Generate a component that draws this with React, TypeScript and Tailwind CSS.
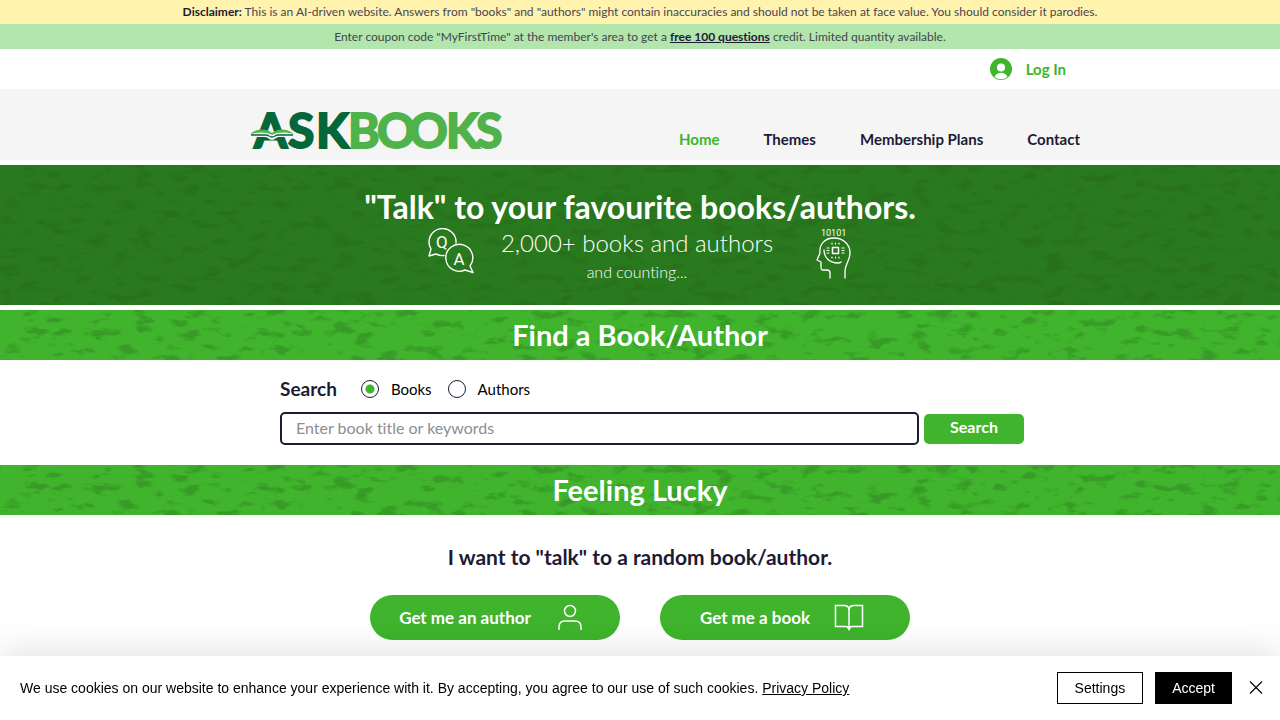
import React, { useState } from "react";

interface TextureProps {
  id: string;
  seed: number;
  opacity: number;
}

// Mottled paint texture behind the green bands
function Texture({ id, seed, opacity }: TextureProps) {
  return (
    <svg
      className="absolute inset-0 h-full w-full"
      aria-hidden="true"
      preserveAspectRatio="none"
    >
      <filter
        id={id}
        x="0"
        y="0"
        width="100%"
        height="100%"
        colorInterpolationFilters="sRGB"
      >
        <feTurbulence
          type="fractalNoise"
          baseFrequency="0.045 0.11"
          numOctaves="6"
          seed={seed}
        />
        <feColorMatrix values="0 0 0 0 0.14  0 0 0 0 0.32  0 0 0 0 0.1  0 0 0 6 -3.3" />
      </filter>
      <rect
        width="100%"
        height="100%"
        filter={`url(#${id})`}
        opacity={opacity}
      />
    </svg>
  );
}

function Logo() {
  return (
    <svg
      width="256"
      height="60"
      viewBox="0 -8 256 60"
      role="img"
      aria-label="AskBooks"
      className="font-[Lato,sans-serif] font-bold"
      fontSize="48"
      strokeWidth="2"
    >
      <text x="4 38 66" y="40" fill="#04673a" stroke="#04673a">
        ASK
      </text>
      <text x="98 127 159 196 226" y="40" fill="#4fb24a" stroke="#4fb24a">
        BOOKS
      </text>
      <path
        d="M0 26c8-5 15-5 22-1 7-4 14-4 22 1l-1 3H29c-3 0-4 3-7 3s-4-3-7-3H0z"
        fill="#f5f5f5"
      />
      <path
        d="M3 24c7-4 14-3 19 1 5-4 12-5 19-1l3 2c-9-2-16-2-22 1-6-3-13-3-22-1z"
        fill="#4fb24a"
      />
      <path
        d="M1 27h15c3 0 3 2 6 2s3-2 6-2h15"
        fill="none"
        stroke="#04673a"
        strokeWidth="1.3"
      />
    </svg>
  );
}

function QuestionAnswerIcon() {
  return (
    <svg
      width="46"
      height="46"
      viewBox="0 0 46 46"
      fill="none"
      stroke="white"
      strokeWidth="1.4"
      strokeLinecap="round"
      strokeLinejoin="round"
      aria-hidden="true"
      className="font-[Roboto,sans-serif] font-normal"
    >
      <path d="M28 15A13.500 13.500 0 1 0 3 21L1 28l7-2q4 2 8 1.500" />
      <path d="M42 38A13.500 13.500 0 1 0 37 42l8 2.500z" />
      <text x="8" y="19.500" fontSize="17" fill="white" stroke="none">
        Q
      </text>
      <text x="25.500" y="37" fontSize="17" fill="white" stroke="none">
        A
      </text>
    </svg>
  );
}

function ThinkingHeadIcon() {
  return (
    <svg
      width="36"
      height="52"
      viewBox="0 0 36 52"
      fill="none"
      stroke="white"
      strokeWidth="1.3"
      strokeLinecap="round"
      strokeLinejoin="round"
      aria-hidden="true"
      className="font-[Roboto,sans-serif]"
    >
      <text x="5" y="8" fontSize="9" fill="white" stroke="none">
        10101
      </text>
      <path d="M14 50v-5c0-2-1-3-3-3H7c-2 0-2-1-2-3v-5l-4-2 3-7C3 16 9 10 18 10c10 0 16 7 16 15 0 8-5 11-5 18v7" />
      <path d="M8 22c0 8 6 13 14 13q2 0 3-1" />
      <rect x="16.500" y="19.500" width="6" height="6" strokeWidth="1.500" />
      <path
        d="M16 16v-1M19.500 16v-1M23 16v-1M16 30v-1M19.500 30v-1M23 30v-1M11 20h2M11 22.500h2M11 25h2M26 20h2M26 22.500h2M26 25h2"
        strokeWidth="1.200"
      />
    </svg>
  );
}

function AuthorIcon() {
  return (
    <svg
      width="30"
      height="30"
      viewBox="0 0 30 30"
      fill="none"
      stroke="white"
      strokeWidth="1.5"
      aria-hidden="true"
    >
      <circle cx="15" cy="8" r="5.500" />
      <path d="M4 27v-3c0-4 2-6 6-6h10c4 0 6 2 6 6v3" />
    </svg>
  );
}

function BookIcon() {
  return (
    <svg
      width="30"
      height="30"
      viewBox="0 0 30 30"
      fill="none"
      stroke="white"
      strokeWidth="1.5"
      aria-hidden="true"
    >
      <path d="M15 7c0-3-2-4.500-5-4.500H1.500v21H12q2 0 3 2 1-2 3-2h10.500v-21H20c-3 0-5 1.500-5 4.500z" />
      <path d="M15 6v19" />
      <path d="M12.500 23.500h5L15 28z" fill="white" stroke="none" />
    </svg>
  );
}

const navItems = [
  { label: "Home", href: "#home", active: true },
  { label: "Themes", href: "#themes", active: false },
  { label: "Membership Plans", href: "#plans", active: false },
  { label: "Contact", href: "#contact", active: false },
];

export default function App() {
  const [searchType, setSearchType] = useState("books");
  const [query, setQuery] = useState("");
  const [showCookies, setShowCookies] = useState(true);

  return (
    <div className="min-h-screen bg-white font-[Lato,sans-serif] text-[#1e1a34] [font-variant-ligatures:none]">
      {/* Notices */}
      <p className="bg-[#fff3ae] text-center text-xs leading-6 text-[#4a4550]">
        <strong className="font-bold text-[#1e1a34]">Disclaimer:</strong> This
        is an AI-driven website. Answers from "books" and "authors" might
        contain inaccuracies and should not be taken at face value. You should
        consider it parodies.
      </p>
      <p className="bg-[#b3e6ac] text-center text-xs leading-[25px] text-[#3f4550]">
        Enter coupon code "MyFirstTime" at the member's area to get a{" "}
        <a href="#free" className="font-bold text-[#1e1a34] underline">
          free 100 questions
        </a>{" "}
        credit. Limited quantity available.
      </p>

      {/* Login bar */}
      <div className="mx-auto flex h-10 max-w-[980px] items-center justify-end pr-16">
        <button className="flex items-center gap-3.5 text-[15px] font-bold text-[#3fb42c]">
          <svg width="22" height="22" viewBox="0 0 22 22" aria-hidden="true">
            <circle cx="11" cy="11" r="11" fill="#3fb42c" />
            <circle cx="11" cy="9.500" r="4" fill="white" />
            <path
              d="M4.500 19c1-3 4-4.200 6.500-4.200s5.500 1.200 6.500 4.200A10.300 10.300 0 0 1 4.500 19z"
              fill="white"
            />
          </svg>
          Log In
        </button>
      </div>

      {/* Header */}
      <header className="bg-[#f5f5f5]">
        <div className="mx-auto flex h-[71px] max-w-[980px] items-end justify-between pr-[50px] pl-[100px]">
          <a href="#home">
            <Logo />
          </a>
          <nav className="flex gap-11 pb-[9px] text-[15px] leading-6 font-bold">
            {navItems.map((item) => (
              <a
                key={item.label}
                href={item.href}
                className={item.active ? "text-[#3fb42c]" : ""}
              >
                {item.label}
              </a>
            ))}
          </nav>
        </div>
      </header>

      <main className="pt-[5px]">
        {/* Hero */}
        <section className="relative h-[140px] bg-[#29791e]">
          <Texture id="hero-texture" seed={11} opacity={0.2} />
          <div className="relative pt-5 text-center text-white">
            <h1 className="text-[32px] leading-[43px] font-bold">
              "Talk" to your favourite books/authors.
            </h1>
            <div className="flex justify-center">
              <QuestionAnswerIcon />
              <div className="w-[342px] pr-4">
                <p className="text-2xl leading-[30px] font-light">
                  2,000+ books and authors
                </p>
                <p className="text-base leading-7 font-light">
                  and counting...
                </p>
              </div>
              <ThinkingHeadIcon />
            </div>
          </div>
        </section>

        <section className="relative mt-[5px] bg-[#3fb42c]">
          <Texture id="find-texture" seed={11} opacity={0.25} />
          <h2 className="relative text-center text-[29px] leading-[50px] font-bold text-white">
            Find a Book/Author
          </h2>
        </section>

        {/* Search */}
        <form
          className="mx-auto h-[105px] max-w-[980px] pt-[15px] pl-[130px]"
          onSubmit={(e) => e.preventDefault()}
        >
          <div className="flex h-7 items-center">
            <label htmlFor="query" className="mr-6 text-[19px] font-bold">
              Search
            </label>
            <label className="mr-4 flex items-center gap-3 text-[15px] text-black">
              <input
                type="radio"
                name="type"
                checked={searchType === "books"}
                onChange={() => setSearchType("books")}
                className="size-[18px] appearance-none rounded-full border border-[#1e1a34] bg-white checked:bg-[radial-gradient(circle,#3fb42c_4px,white_5px)]"
              />
              Books
            </label>
            <label className="flex items-center gap-3 text-[15px] text-black">
              <input
                type="radio"
                name="type"
                checked={searchType === "authors"}
                onChange={() => setSearchType("authors")}
                className="size-[18px] appearance-none rounded-full border border-[#1e1a34] bg-white checked:bg-[radial-gradient(circle,#3fb42c_4px,white_5px)]"
              />
              Authors
            </label>
          </div>
          <div className="mt-[9px] flex items-center gap-[5px]">
            <input
              id="query"
              type="text"
              value={query}
              onChange={(e) => setQuery(e.target.value)}
              placeholder="Enter book title or keywords"
              className="h-[33px] w-[639px] rounded-[5px] border-2 border-[#1e1a34] px-3.5 pb-0.5 text-base placeholder:text-[#8e8d94]"
            />
            <button
              type="submit"
              className="h-[30px] w-[100px] rounded-[5px] bg-[#3fb42c] pb-1 text-base font-bold text-white"
            >
              Search
            </button>
          </div>
        </form>

        <section className="relative bg-[#3fb42c]">
          <Texture id="lucky-texture" seed={11} opacity={0.25} />
          <h2 className="relative text-center text-[29px] leading-[50px] font-bold text-white">
            Feeling Lucky
          </h2>
        </section>

        {/* Random pick */}
        <section className="pt-7 text-center">
          <p className="text-[21px] leading-7 font-bold">
            I want to "talk" to a random book/author.
          </p>
          <div className="mt-6 flex justify-center gap-10">
            <button className="flex h-[45px] w-[250px] items-center justify-center gap-6 rounded-full bg-[#3fb42c] pr-1.5 text-[17px] font-bold text-white">
              Get me an author
              <AuthorIcon />
            </button>
            <button className="flex h-[45px] w-[250px] items-center justify-center gap-6 rounded-full bg-[#3fb42c] pr-1.5 text-[17px] font-bold text-white">
              Get me a book
              <BookIcon />
            </button>
          </div>
        </section>
      </main>

      {/* Cookie banner */}
      {showCookies && (
        <div className="fixed inset-x-0 bottom-0 flex h-16 items-center bg-white px-5 font-['Liberation_Sans',sans-serif] text-sm text-black shadow-[0_0_40px_rgba(0,0,0,0.15)]">
          <p className="flex-1">
            We use cookies on our website to enhance your experience with it. By
            accepting, you agree to our use of such cookies.{" "}
            <a href="#privacy" className="underline">
              Privacy Policy
            </a>
          </p>
          <button className="h-8 border border-black px-[17px]">
            Settings
          </button>
          <button
            className="ml-3 h-8 bg-black px-[17px] text-white"
            onClick={() => setShowCookies(false)}
          >
            Accept
          </button>
          <button
            className="-mr-1 ml-4"
            aria-label="Close"
            onClick={() => setShowCookies(false)}
          >
            <svg
              width="16"
              height="16"
              viewBox="0 0 16 16"
              stroke="black"
              strokeWidth="1.1"
            >
              <path d="M2 1.500l12 12M14 1.500l-12 12" />
            </svg>
          </button>
        </div>
      )}
    </div>
  );
}
